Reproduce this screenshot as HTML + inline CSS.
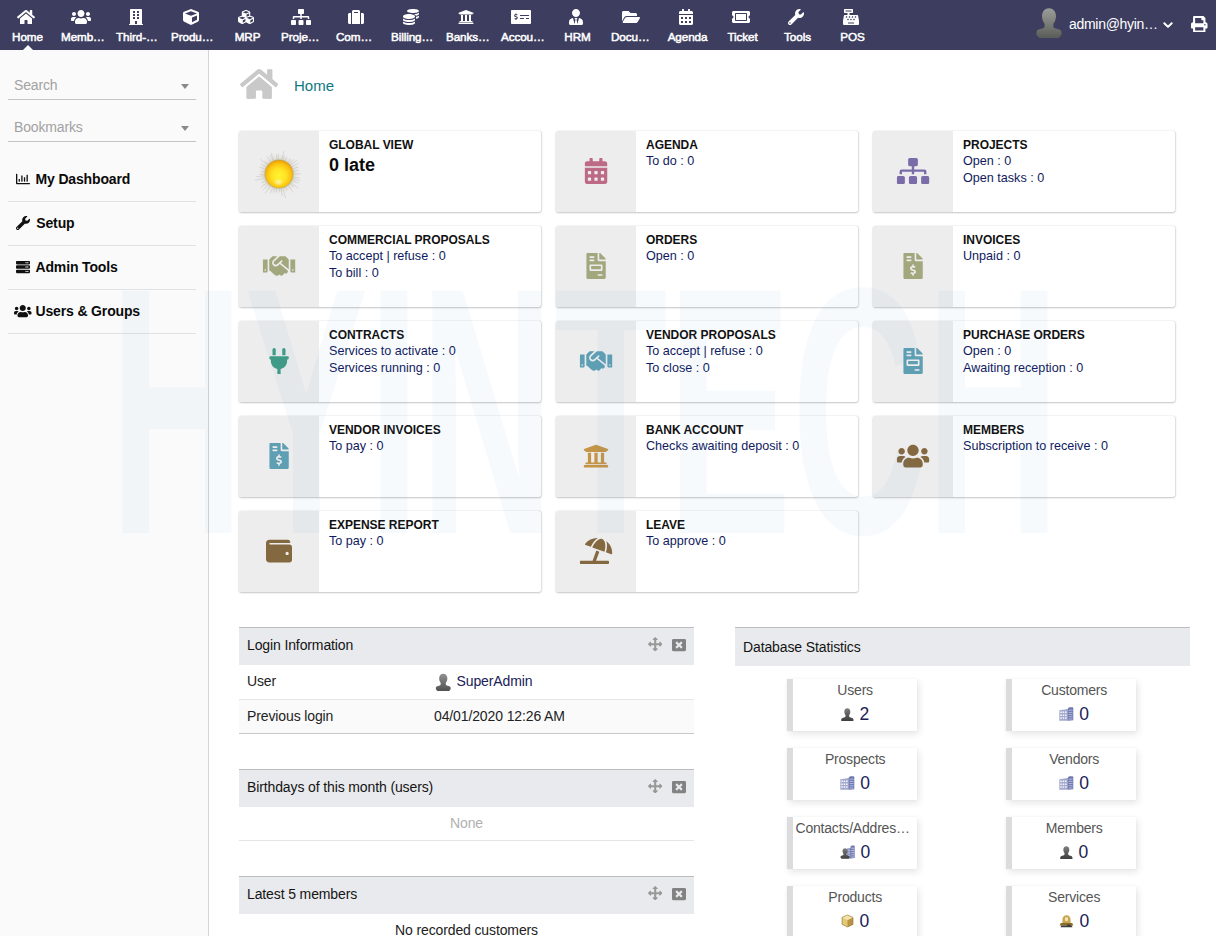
<!DOCTYPE html>
<html><head><meta charset="utf-8"><title>Home</title><style>
*{box-sizing:border-box}
html,body{margin:0;padding:0}
body{width:1216px;height:936px;overflow:hidden;position:relative;background:#fff;font-family:"Liberation Sans",sans-serif;font-size:14px;color:#000}
svg{display:block}
#hdr{position:absolute;left:0;top:0;width:1216px;height:50px;background:#3c3d5f;}
.nav{position:absolute;top:0;width:55px;height:50px;color:#fff}
.nav svg{position:absolute;top:9px;left:26.300px;transform:translateX(-50%)}
.nav span{position:absolute;left:0;width:55px;top:29.700px;text-align:center;font-size:11.7px;line-height:14px;white-space:nowrap;letter-spacing:-0.1px;-webkit-text-stroke:.5px #fff}
#tri{position:absolute;left:22.500px;top:45px;width:0;height:0;border-left:5.500px solid transparent;border-right:5.500px solid transparent;border-bottom:5px solid #fafafa}
#side{position:absolute;left:0;top:50px;width:209px;height:886px;background:#fafafa;border-right:1px solid #d4d4d4}
.sel{position:absolute;left:8px;width:188px;border-bottom:1px solid #c4c4c4;height:28px}
.sel span{position:absolute;left:6px;top:5px;font-size:14px;letter-spacing:-0.15px;line-height:16px;color:#a2a2a2}
.sel i{position:absolute;left:173px;top:12px;width:0;height:0;border-left:4px solid transparent;border-right:4px solid transparent;border-top:5px solid #8a8a8a}
.mi{position:absolute;left:8px;width:188px;height:44px;border-bottom:1px solid #e2e2e2}
.mi svg{position:absolute}
.mi b{position:absolute;top:11.800px;font-size:14px;line-height:18px;font-weight:bold;color:#0a0a0a;letter-spacing:-0.15px}
#crumb{position:absolute;left:294px;top:76px;font-size:15px;line-height:20px;color:#0f7882}
.card{position:absolute;width:302px;height:81px;background:#fff;border-radius:2px;box-shadow:0 1px 2px rgba(0,0,0,.2),1px 0 2px rgba(0,0,0,.08),0 0 1px rgba(0,0,0,.16)}
.card .ic{position:absolute;left:0;top:0;width:80px;height:81px;background:#ededed;border-radius:2px 0 0 2px}
.card .ic svg{position:absolute;left:50%;top:40.200px;transform:translate(-50%,-50%)}
.card .t{position:absolute;left:90px;top:7px;font-size:12px;line-height:14px;font-weight:bold;color:#111;white-space:nowrap;letter-spacing:-0.02px}
.card .l{position:absolute;left:90px;font-size:12.6px;line-height:14px;color:#0f1a60;white-space:nowrap}
.card .big{position:absolute;left:90px;top:23.500px;font-size:18px;line-height:20px;font-weight:bold;color:#0a0a0a;white-space:nowrap}
.box{position:absolute}
.bh{position:absolute;left:0;width:100%;height:38px;background:#e9eaed;border-top:1px solid #bdbdbd}
.bh span{position:absolute;left:8px;top:9.300px;font-size:14px;line-height:16px;color:#141414;letter-spacing:-0.12px;white-space:nowrap}
.bh svg{position:absolute}
.row{position:absolute;left:0;width:100%;height:34px;font-size:14px;color:#222}
.row span{position:absolute;top:8px;line-height:16px;white-space:nowrap;letter-spacing:-0.12px}
.st{position:absolute;width:130.300px;height:52.400px;background:#fff;border-left:6px solid #dcdcdc;box-shadow:2px 3px 7px rgba(0,0,0,.10),0 0 1px rgba(0,0,0,.08)}
.st .n{position:absolute;left:0;width:124.300px;top:3.200px;text-align:center;font-size:14px;letter-spacing:-0.2px;line-height:16px;color:#555;white-space:nowrap}
.st .v{position:absolute;left:0;width:124.300px;top:24px;height:22px;text-align:center;font-size:17.5px;line-height:22px;color:#1a2157;white-space:nowrap}
.st .v svg{display:inline-block;vertical-align:-1px;margin-right:5.500px}
#wm{position:absolute;left:0;top:0;pointer-events:none}
</style></head><body>
<div id="hdr">
<div class="nav" style="left:0px"><svg  width="18.0" height="16" viewBox="0 0 576 512"><path fill="#fff" d="M280.37 148.26L96 300.11V464a16 16 0 0 0 16 16l112.06-.29a16 16 0 0 0 15.92-16V368a16 16 0 0 1 16-16h64a16 16 0 0 1 16 16v95.64a16 16 0 0 0 16 16.05L464 480a16 16 0 0 0 16-16V300L295.67 148.26a12.19 12.19 0 0 0-15.3 0zM571.6 251.47L488 182.56V44.05a12 12 0 0 0-12-12h-56a12 12 0 0 0-12 12v72.61L318.47 43a48 48 0 0 0-61 0L4.34 251.47a12 12 0 0 0-1.6 16.9l25.5 31A12 12 0 0 0 45.15 301l235.22-193.74a12.19 12.19 0 0 1 15.3 0L530.9 301a12 12 0 0 0 16.9-1.6l25.5-31a12 12 0 0 0-1.7-16.93z"/></svg><span>Home</span></div>
<div class="nav" style="left:55px"><svg  width="20.0" height="16" viewBox="0 0 640 512"><path fill="#fff" d="M96 224c35.3 0 64-28.7 64-64s-28.7-64-64-64-64 28.7-64 64 28.7 64 64 64zm448 0c35.3 0 64-28.7 64-64s-28.7-64-64-64-64 28.7-64 64 28.7 64 64 64zm32 32h-64c-17.6 0-33.5 7.1-45.1 18.600 40.3 22.1 68.9 62 75.1 109.400h66c17.700 0 32-14.300 32-32v-32c0-35.300-28.700-64-64-64zm-256 0c61.900 0 112-50.100 112-112S381.900 32 320 32 208 82.100 208 144s50.100 112 112 112zm76.800 32h-8.300c-20.800 10-43.900 16-68.500 16s-47.600-6-68.500-16h-8.300C179.600 288 128 339.600 128 403.200V432c0 26.500 21.500 48 48 48h288c26.500 0 48-21.500 48-48v-28.800c0-63.600-51.600-115.200-115.200-115.200zm-223.700-13.400C161.500 263.100 145.600 256 128 256H64c-35.300 0-64 28.700-64 64v32c0 17.700 14.300 32 32 32h65.900c6.300-47.400 34.900-87.300 75.200-109.400z"/></svg><span style="text-align:left;left:6px">Memb…</span></div>
<div class="nav" style="left:110px"><svg  width="14.0" height="16" viewBox="0 0 448 512"><path fill="#fff" d="M436 480h-20V24c0-13.255-10.745-24-24-24H56C42.745 0 32 10.745 32 24v456H12c-6.627 0-12 5.373-12 12v20h448v-20c0-6.627-5.373-12-12-12zM128 76c0-6.627 5.373-12 12-12h40c6.627 0 12 5.373 12 12v40c0 6.627-5.373 12-12 12h-40c-6.627 0-12-5.373-12-12V76zm0 96c0-6.627 5.373-12 12-12h40c6.627 0 12 5.373 12 12v40c0 6.627-5.373 12-12 12h-40c-6.627 0-12-5.373-12-12v-40zm52 148h-40c-6.627 0-12-5.373-12-12v-40c0-6.627 5.373-12 12-12h40c6.627 0 12 5.373 12 12v40c0 6.627-5.373 12-12 12zm76 160h-64v-84c0-6.627 5.373-12 12-12h40c6.627 0 12 5.373 12 12v84zm64-172c0 6.627-5.373 12-12 12h-40c-6.627 0-12-5.373-12-12v-40c0-6.627 5.373-12 12-12h40c6.627 0 12 5.373 12 12v40zm0-96c0 6.627-5.373 12-12 12h-40c-6.627 0-12-5.373-12-12v-40c0-6.627 5.373-12 12-12h40c6.627 0 12 5.373 12 12v40zm0-96c0 6.627-5.373 12-12 12h-40c-6.627 0-12-5.373-12-12V76c0-6.627 5.373-12 12-12h40c6.627 0 12 5.373 12 12v40z"/></svg><span style="text-align:left;left:6px">Third-…</span></div>
<div class="nav" style="left:165px"><svg  width="16.0" height="16" viewBox="0 0 512 512"><path fill="#fff" d="M239.1 6.3l-208 78c-18.7 7-31.1 25-31.1 45v225.1c0 18.2 10.3 34.8 26.5 42.900l208 104c13.5 6.8 29.4 6.8 42.9 0l208-104c16.3-8.100 26.500-24.800 26.500-42.900V129.300c0-20-12.400-37.900-31.100-44.900l-208-78C262 2.200 250 2.200 239.100 6.300zM256 68.400l192 72v1.100l-192 78-192-78v-1.100l192-72zm32 356V275.500l160-65v133.900l-160 80z"/></svg><span style="text-align:left;left:6px">Produ…</span></div>
<div class="nav" style="left:220px"><svg  width="16.0" height="16" viewBox="0 0 512 512"><path fill="#fff" d="M488.6 250.2L392 214V105.500c0-15-9.300-28.400-23.400-33.700l-100-37.500c-8.100-3.100-17.100-3.100-25.300 0l-100 37.500c-14.100 5.300-23.400 18.700-23.400 33.700V214l-96.600 36.200C9.300 255.500 0 268.900 0 283.900V394c0 13.600 7.700 26.100 19.900 32.200l100 50c10.100 5.100 22.100 5.100 32.200 0l103.900-52 103.900 52c10.100 5.100 22.100 5.100 32.200 0l100-50c12.200-6.100 19.900-18.600 19.900-32.200V283.900c0-15-9.300-28.400-23.400-33.700zM358 214.800l-85 31.900v-68.200l85-37v73.300zM154 104.100l102-38.200 102 38.200v.6l-102 41.400-102-41.400v-.6zm84 291.100l-85 42.500v-79.100l85-38.800v75.400zm0-112l-102 41.400-102-41.400v-.6l102-38.200 102 38.200v.6zm240 112l-85 42.500v-79.100l85-38.800v75.400zm0-112l-102 41.400-102-41.400v-.6l102-38.200 102 38.200v.6z"/></svg><span>MRP</span></div>
<div class="nav" style="left:275px"><svg  width="20.0" height="16" viewBox="0 0 640 512"><path fill="#fff" d="M128 352H32c-17.670 0-32 14.330-32 32v96c0 17.670 14.330 32 32 32h96c17.670 0 32-14.330 32-32v-96c0-17.670-14.330-32-32-32zm-24-80h192v48h48v-48h192v48h48v-57.590c0-21.170-17.230-38.410-38.410-38.410H344v-64h40c17.670 0 32-14.330 32-32V32c0-17.670-14.330-32-32-32H256c-17.670 0-32 14.330-32 32v96c0 17.670 14.330 32 32 32h40v64H94.410C73.230 224 56 241.230 56 262.410V320h48v-48zm264 80h-96c-17.670 0-32 14.330-32 32v96c0 17.670 14.330 32 32 32h96c17.670 0 32-14.330 32-32v-96c0-17.670-14.330-32-32-32zm240 0h-96c-17.670 0-32 14.330-32 32v96c0 17.670 14.330 32 32 32h96c17.670 0 32-14.330 32-32v-96c0-17.670-14.330-32-32-32z"/></svg><span style="text-align:left;left:6px">Proje…</span></div>
<div class="nav" style="left:330px"><svg  width="16.0" height="16" viewBox="0 0 512 512"><path fill="#fff" d="M128 480h256V80c0-26.500-21.500-48-48-48H176c-26.500 0-48 21.500-48 48v400zm64-384h128v32H192V96zm320 80v256c0 26.500-21.500 48-48 48h-48V128h48c26.500 0 48 21.500 48 48zM96 480H48c-26.500 0-48-21.500-48-48V176c0-26.500 21.500-48 48-48h48v352z"/></svg><span style="text-align:left;left:6px">Com…</span></div>
<div class="nav" style="left:385px"><svg  width="16.0" height="16" viewBox="0 0 512 512"><path fill="#fff" d="M0 405.300V448c0 35.300 86 64 192 64s192-28.700 192-64v-42.700C342.700 434.400 267.200 448 192 448S41.300 434.400 0 405.300zM320 128c106 0 192-28.700 192-64S426 0 320 0 128 28.700 128 64s86 64 192 64zM0 300.400V352c0 35.300 86 64 192 64s192-28.700 192-64v-51.600c-41.300 34-116.900 51.600-192 51.600S41.300 334.400 0 300.400zm416 11c57.300-11.100 96-31.700 96-55.400v-42.700c-23.200 16.400-57.300 27.600-96 34.500v63.600zM192 160C86 160 0 195.800 0 240s86 80 192 80 192-35.800 192-80-86-80-192-80zm219.300 56.300c60-10.800 100.700-32 100.700-56.300v-42.700c-35.500 25.100-96.500 38.600-160.700 41.800 29.500 14.300 51.200 33.500 60 57.200z"/></svg><span style="text-align:left;left:6px">Billing…</span></div>
<div class="nav" style="left:440px"><svg  width="16.0" height="16" viewBox="0 0 512 512"><path fill="#fff" d="M496 128v16a8 8 0 0 1-8 8h-24v12c0 6.627-5.373 12-12 12H60c-6.627 0-12-5.373-12-12v-12H24a8 8 0 0 1-8-8v-16a8 8 0 0 1 4.941-7.392l232-88a7.996 7.996 0 0 1 6.118 0l232 88A8 8 0 0 1 496 128zm-24 304H40c-13.255 0-24 10.745-24 24v16a8 8 0 0 0 8 8h464a8 8 0 0 0 8-8v-16c0-13.255-10.745-24-24-24zM96 192v192H60c-6.627 0-12 5.373-12 12v20h416v-20c0-6.627-5.373-12-12-12h-36V192h-64v192h-64V192h-64v192h-64V192H96z"/></svg><span style="text-align:left;left:6px">Banks…</span></div>
<div class="nav" style="left:495px"><svg  width="20.0" height="16" viewBox="0 0 640 512"><path fill="#fff" d="M608 32H32C14.33 32 0 46.33 0 64v384c0 17.670 14.330 32 32 32h576c17.670 0 32-14.330 32-32V64c0-17.670-14.330-32-32-32zM176 327.880V344c0 4.420-3.580 8-8 8h-16c-4.420 0-8-3.580-8-8v-16.290c-11.290-.58-22.270-4.520-31.370-11.350-3.900-2.930-4.100-8.770-.57-12.140l11.750-11.210c2.770-2.640 6.890-2.760 10.130-.73 3.870 2.420 8.260 3.720 12.820 3.720h28.110c6.500 0 11.800-5.920 11.800-13.190 0-5.950-3.610-11.190-8.770-12.730l-45-13.500c-18.590-5.580-31.580-23.420-31.580-43.390 0-24.520 19.050-44.440 42.670-45.070V152c0-4.420 3.580-8 8-8h16c4.420 0 8 3.580 8 8v16.290c11.290.58 22.270 4.510 31.370 11.350 3.900 2.930 4.100 8.770.57 12.140l-11.750 11.210c-2.770 2.640-6.890 2.760-10.130.73-3.870-2.430-8.260-3.720-12.820-3.720h-28.110c-6.500 0-11.800 5.920-11.800 13.190 0 5.950 3.610 11.190 8.770 12.730l45 13.500c18.590 5.580 31.580 23.420 31.580 43.390 0 24.530-19.050 44.440-42.670 45.070zM416 312c0 4.420-3.580 8-8 8H296c-4.420 0-8-3.580-8-8v-16c0-4.420 3.580-8 8-8h112c4.420 0 8 3.580 8 8v16zm160 0c0 4.420-3.580 8-8 8h-80c-4.420 0-8-3.580-8-8v-16c0-4.420 3.580-8 8-8h80c4.420 0 8 3.580 8 8v16zm0-96c0 4.420-3.580 8-8 8H296c-4.420 0-8-3.580-8-8v-16c0-4.420 3.580-8 8-8h272c4.420 0 8 3.580 8 8v16z"/></svg><span style="text-align:left;left:6px">Accou…</span></div>
<div class="nav" style="left:550px"><svg  width="14.0" height="16" viewBox="0 0 448 512"><path fill="#fff" d="M224 256c70.700 0 128-57.300 128-128S294.700 0 224 0 96 57.300 96 128s57.300 128 128 128zm95.800 32.600L272 480l-32-136 32-56h-96l32 56-32 136-47.800-191.400C56.900 292 0 350.300 0 422.400V464c0 26.500 21.500 48 48 48h352c26.500 0 48-21.500 48-48v-41.600c0-72.100-56.900-130.400-128.200-133.800z"/></svg><span>HRM</span></div>
<div class="nav" style="left:605px"><svg  width="18.0" height="16" viewBox="0 0 576 512"><path fill="#fff" d="M572.694 292.093L500.27 416.248A63.997 63.997 0 0 1 444.989 448H45.025c-18.523 0-30.064-20.093-20.731-36.093l72.424-124.155A64 64 0 0 1 152 256h399.964c18.523 0 30.064 20.093 20.730 36.093zM152 224h328v-48c0-26.510-21.490-48-48-48H272l-64-64H48C21.490 64 0 85.490 0 112v278.046l69.077-118.418C86.214 242.250 117.989 224 152 224z"/></svg><span style="text-align:left;left:6px">Docu…</span></div>
<div class="nav" style="left:660px"><svg  width="14.0" height="16" viewBox="0 0 448 512"><path fill="#fff" d="M0 464c0 26.500 21.500 48 48 48h352c26.500 0 48-21.500 48-48V192H0v272zm320-196c0-6.600 5.400-12 12-12h40c6.600 0 12 5.400 12 12v40c0 6.600-5.400 12-12 12h-40c-6.600 0-12-5.400-12-12v-40zm0 128c0-6.600 5.400-12 12-12h40c6.600 0 12 5.400 12 12v40c0 6.600-5.400 12-12 12h-40c-6.600 0-12-5.400-12-12v-40zM192 268c0-6.600 5.400-12 12-12h40c6.600 0 12 5.400 12 12v40c0 6.600-5.400 12-12 12h-40c-6.600 0-12-5.400-12-12v-40zm0 128c0-6.600 5.400-12 12-12h40c6.600 0 12 5.400 12 12v40c0 6.600-5.400 12-12 12h-40c-6.600 0-12-5.400-12-12v-40zM64 268c0-6.600 5.400-12 12-12h40c6.600 0 12 5.400 12 12v40c0 6.600-5.400 12-12 12H76c-6.600 0-12-5.400-12-12v-40zm0 128c0-6.600 5.400-12 12-12h40c6.600 0 12 5.400 12 12v40c0 6.600-5.400 12-12 12H76c-6.600 0-12-5.400-12-12v-40zM400 64h-48V16c0-8.800-7.200-16-16-16h-32c-8.800 0-16 7.200-16 16v48H160V16c0-8.800-7.200-16-16-16h-32c-8.800 0-16 7.200-16 16v48H48C21.500 64 0 85.500 0 112v48h448v-48c0-26.500-21.500-48-48-48z"/></svg><span>Agenda</span></div>
<div class="nav" style="left:715px"><svg  width="18.0" height="16" viewBox="0 0 576 512"><path fill="#fff" d="M128 160h320v192H128V160zm400 96c0 26.510 21.490 48 48 48v96c0 26.510-21.490 48-48 48H48c-26.510 0-48-21.490-48-48v-96c26.510 0 48-21.490 48-48s-21.490-48-48-48v-96c0-26.510 21.490-48 48-48h480c26.510 0 48 21.490 48 48v96c-26.510 0-48 21.490-48 48zm-48-104c0-13.255-10.745-24-24-24H120c-13.255 0-24 10.745-24 24v208c0 13.255 10.745 24 24 24h336c13.255 0 24-10.745 24-24V152z"/></svg><span>Ticket</span></div>
<div class="nav" style="left:770px"><svg  width="16.0" height="16" viewBox="0 0 512 512"><path fill="#fff" d="M507.73 109.1c-2.24-9.03-13.54-12.09-20.12-5.51l-74.36 74.36-67.88-11.310-11.310-67.880 74.360-74.360c6.620-6.620 3.430-17.900-5.660-20.160-47.380-11.740-99.550.910-136.580 37.930-39.640 39.640-50.550 97.100-34.050 147.200L18.740 402.760c-24.990 24.990-24.990 65.510 0 90.500 24.990 24.990 65.510 24.990 90.500 0l213.210-213.210c50.120 16.710 107.470 5.680 147.370-34.220 37.070-37.070 49.700-89.320 37.910-136.730zM64 472c-13.250 0-24-10.750-24-24 0-13.260 10.750-24 24-24s24 10.740 24 24c0 13.250-10.750 24-24 24z"/></svg><span>Tools</span></div>
<div class="nav" style="left:825px"><svg  width="16.0" height="16" viewBox="0 0 512 512"><path fill="#fff" d="M511.1 378.8l-26.7-160c-2.6-15.400-15.900-26.700-31.600-26.700H208v-64h96c8.800 0 16-7.200 16-16V16c0-8.800-7.200-16-16-16H48c-8.800 0-16 7.200-16 16v96c0 8.800 7.200 16 16 16h96v64H59.100c-15.600 0-29 11.300-31.600 26.700L.8 378.700c-.6 3.500-.9 7-.9 10.500V480c0 17.700 14.300 32 32 32h448c17.700 0 32-14.300 32-32v-90.700c.1-3.500-.2-7-.8-10.500zM280 248c0-8.800 7.200-16 16-16h16c8.800 0 16 7.200 16 16v16c0 8.800-7.200 16-16 16h-16c-8.800 0-16-7.200-16-16v-16zm-32 64h16c8.800 0 16 7.200 16 16v16c0 8.800-7.200 16-16 16h-16c-8.800 0-16-7.200-16-16v-16c0-8.800 7.200-16 16-16zm-32-80c8.800 0 16 7.200 16 16v16c0 8.800-7.200 16-16 16h-16c-8.800 0-16-7.200-16-16v-16c0-8.800 7.200-16 16-16h16zM80 80V48h192v32H80zm40 200h-16c-8.800 0-16-7.200-16-16v-16c0-8.800 7.200-16 16-16h16c8.800 0 16 7.200 16 16v16c0 8.800-7.200 16-16 16zm16 64v-16c0-8.800 7.200-16 16-16h16c8.800 0 16 7.200 16 16v16c0 8.800-7.200 16-16 16h-16c-8.800 0-16-7.200-16-16zm216 112c0 4.400-3.600 8-8 8H168c-4.400 0-8-3.600-8-8v-16c0-4.400 3.600-8 8-8h176c4.400 0 8 3.600 8 8v16zm24-112c0 8.800-7.200 16-16 16h-16c-8.800 0-16-7.200-16-16v-16c0-8.800 7.200-16 16-16h16c8.800 0 16 7.200 16 16v16zm48-80c0 8.800-7.200 16-16 16h-16c-8.800 0-16-7.200-16-16v-16c0-8.800 7.200-16 16-16h16c8.800 0 16 7.200 16 16v16z"/></svg><span>POS</span></div>
<div id="tri"></div>
<svg style="position:absolute;left:1035px;top:7px" width="28" height="32" viewBox="0 0 28 32"><defs><linearGradient id="ag" x1="0" y1="0" x2="0" y2="1"><stop offset="0" stop-color="#9a9d98"/><stop offset="0.5" stop-color="#7c7f79"/><stop offset="1" stop-color="#595c57"/></linearGradient></defs><path fill="url(#ag)" d="M14 1.200c4 0 7 3.300 7 7.800 0 3.300-1.200 6.100-2.600 7.700v2.600c0 1 .6 1.700 1.600 2l4.300 1.200c1.400.4 2.300 1.500 2.300 2.900v1.400c0 .5-.2 1-.5 1.400l-1.700 2c-.4.400-.9.700-1.500.700H5.100c-.6 0-1.100-.3-1.500-.7l-1.700-2c-.3-.4-.5-.9-.5-1.400v-1.400c0-1.400.9-2.500 2.300-2.900L8 21.300c1-.3 1.600-1 1.600-2v-2.600C8.200 15.100 7 12.300 7 9c0-4.500 3-7.800 7-7.800z"/></svg><span style="position:absolute;left:1069px;top:15.500px;font-size:14px;line-height:16px;color:#fff;letter-spacing:-0.3px;white-space:nowrap">admin@hyin…</span>
<svg style="position:absolute;left:1162.200px;top:20.600px" width="12" height="9" viewBox="0 0 12 9"><path d="M2.300 2.200l3.700 3.700 3.700-3.700" fill="none" stroke="#fff" stroke-width="2" stroke-linecap="round" stroke-linejoin="round"/></svg>
<svg style="position:absolute;left:1191px;top:15.800px" width="16.5" height="16.5" viewBox="0 0 512 512"><path fill="#fff" d="M448 192V77.250c0-8.490-3.370-16.620-9.370-22.630L393.370 9.370c-6-6-14.140-9.370-22.630-9.370H96C78.330 0 64 14.330 64 32v160c-35.350 0-64 28.650-64 64v112c0 8.840 7.160 16 16 16h48v96c0 17.670 14.330 32 32 32h320c17.670 0 32-14.330 32-32v-96h48c8.840 0 16-7.160 16-16V256c0-35.350-28.650-64-64-64zm-64 256H128v-96h256v96zm0-224H128V64h192v48c0 8.840 7.160 16 16 16h48v96zm48 72c-13.250 0-24-10.750-24-24 0-13.260 10.750-24 24-24s24 10.740 24 24c0 13.250-10.750 24-24 24z"/></svg>
</div>
<div id="side">
<div class="sel" style="top:22px"><span>Search</span><i></i></div>
<div class="sel" style="top:64px"><span>Bookmarks</span><i></i></div>
<div class="mi" style="top:108px"><svg style="left:7.75px;top:14.200px"  width="14.0" height="14" viewBox="0 0 512 512"><path fill="#111" d="M396.8 352h22.400c6.400 0 12.800-6.400 12.800-12.800V108.800c0-6.400-6.400-12.800-12.800-12.800h-22.400c-6.400 0-12.800 6.400-12.800 12.800v230.400c0 6.400 6.400 12.800 12.800 12.800zm-192 0h22.400c6.400 0 12.800-6.400 12.800-12.800V140.800c0-6.400-6.400-12.800-12.800-12.800h-22.400c-6.400 0-12.800 6.400-12.800 12.800v198.400c0 6.400 6.400 12.800 12.800 12.800zm96 0h22.400c6.400 0 12.800-6.400 12.800-12.800V204.800c0-6.400-6.400-12.800-12.800-12.800h-22.400c-6.400 0-12.800 6.400-12.800 12.800v134.400c0 6.400 6.400 12.800 12.800 12.800zM496 400H48V80c0-8.840-7.160-16-16-16H16C7.160 64 0 71.160 0 80v336c0 17.670 14.330 32 32 32h464c8.840 0 16-7.160 16-16v-16c0-8.840-7.160-16-16-16zm-387.200-48h22.400c6.400 0 12.800-6.400 12.800-12.800v-70.400c0-6.400-6.400-12.800-12.800-12.800h-22.400c-6.400 0-12.800 6.400-12.800 12.800v70.400c0 6.400 6.400 12.800 12.800 12.800z"/></svg><b style="left:27.5px">My Dashboard</b></div>
<div class="mi" style="top:152px"><svg style="left:7.75px;top:14.200px"  width="14.0" height="14" viewBox="0 0 512 512"><path fill="#111" d="M507.73 109.1c-2.24-9.03-13.54-12.09-20.12-5.51l-74.36 74.36-67.88-11.310-11.310-67.880 74.360-74.360c6.620-6.620 3.430-17.900-5.660-20.160-47.380-11.740-99.550.910-136.580 37.930-39.640 39.640-50.550 97.100-34.050 147.200L18.740 402.760c-24.990 24.990-24.990 65.510 0 90.500 24.990 24.990 65.510 24.990 90.500 0l213.210-213.210c50.120 16.710 107.470 5.680 147.370-34.220 37.070-37.070 49.700-89.320 37.910-136.730zM64 472c-13.250 0-24-10.750-24-24 0-13.260 10.750-24 24-24s24 10.740 24 24c0 13.250-10.750 24-24 24z"/></svg><b style="left:28.299999999999997px">Setup</b></div>
<div class="mi" style="top:196px"><svg style="left:7.75px;top:14.200px"  width="14.0" height="14" viewBox="0 0 512 512"><path fill="#111" d="M480 160H32c-17.673 0-32-14.327-32-32V64c0-17.673 14.327-32 32-32h448c17.673 0 32 14.327 32 32v64c0 17.673-14.327 32-32 32zm-48-88c-13.255 0-24 10.745-24 24s10.745 24 24 24 24-10.745 24-24-10.745-24-24-24zm-64 0c-13.255 0-24 10.745-24 24s10.745 24 24 24 24-10.745 24-24-10.745-24-24-24zm112 248H32c-17.673 0-32-14.327-32-32v-64c0-17.673 14.327-32 32-32h448c17.673 0 32 14.327 32 32v64c0 17.673-14.327 32-32 32zm-48-88c-13.255 0-24 10.745-24 24s10.745 24 24 24 24-10.745 24-24-10.745-24-24-24zm-64 0c-13.255 0-24 10.745-24 24s10.745 24 24 24 24-10.745 24-24-10.745-24-24-24zm112 248H32c-17.673 0-32-14.327-32-32v-64c0-17.673 14.327-32 32-32h448c17.673 0 32 14.327 32 32v64c0 17.673-14.327 32-32 32zm-48-88c-13.255 0-24 10.745-24 24s10.745 24 24 24 24-10.745 24-24-10.745-24-24-24zm-64 0c-13.255 0-24 10.745-24 24s10.745 24 24 24 24-10.745 24-24-10.745-24-24-24z"/></svg><b style="left:27.5px">Admin Tools</b></div>
<div class="mi" style="top:240px"><svg style="left:6.00px;top:14.200px"  width="17.5" height="14" viewBox="0 0 640 512"><path fill="#111" d="M96 224c35.3 0 64-28.7 64-64s-28.7-64-64-64-64 28.7-64 64 28.7 64 64 64zm448 0c35.3 0 64-28.7 64-64s-28.7-64-64-64-64 28.7-64 64 28.7 64 64 64zm32 32h-64c-17.6 0-33.5 7.1-45.1 18.600 40.3 22.1 68.9 62 75.1 109.400h66c17.700 0 32-14.300 32-32v-32c0-35.300-28.700-64-64-64zm-256 0c61.900 0 112-50.100 112-112S381.900 32 320 32 208 82.100 208 144s50.100 112 112 112zm76.800 32h-8.300c-20.800 10-43.900 16-68.500 16s-47.600-6-68.500-16h-8.300C179.600 288 128 339.600 128 403.200V432c0 26.500 21.500 48 48 48h288c26.500 0 48-21.500 48-48v-28.800c0-63.600-51.600-115.200-115.200-115.200zm-223.700-13.400C161.500 263.100 145.600 256 128 256H64c-35.300 0-64 28.700-64 64v32c0 17.700 14.300 32 32 32h65.900c6.300-47.400 34.900-87.300 75.200-109.400z"/></svg><b style="left:27.5px">Users &amp; Groups</b></div>
</div>
<svg style="position:absolute;left:240px;top:67px" width="38.25" height="34" viewBox="0 0 576 512"><path fill="#c9c9c9" d="M280.37 148.26L96 300.11V464a16 16 0 0 0 16 16l112.06-.29a16 16 0 0 0 15.92-16V368a16 16 0 0 1 16-16h64a16 16 0 0 1 16 16v95.64a16 16 0 0 0 16 16.05L464 480a16 16 0 0 0 16-16V300L295.67 148.26a12.19 12.19 0 0 0-15.3 0zM571.6 251.47L488 182.56V44.05a12 12 0 0 0-12-12h-56a12 12 0 0 0-12 12v72.61L318.47 43a48 48 0 0 0-61 0L4.34 251.47a12 12 0 0 0-1.6 16.9l25.5 31A12 12 0 0 0 45.15 301l235.22-193.74a12.19 12.19 0 0 1 15.3 0L530.9 301a12 12 0 0 0 16.9-1.6l25.5-31a12 12 0 0 0-1.7-16.93z"/></svg>
<div id="crumb">Home</div>
<div class="card" style="left:239px;top:131px"><div class="ic"><svg width="52" height="52" viewBox="-1 -1 52 52" style="margin-top:3.300px;margin-left:.3px"><defs><radialGradient id="sg" cx="0.5" cy="0.56" r="0.56"><stop offset="0" stop-color="#fff530"/><stop offset="0.45" stop-color="#ffe324"/><stop offset="0.8" stop-color="#fbbf10"/><stop offset="1" stop-color="#ec9a00"/></radialGradient><radialGradient id="sr" cx="0.5" cy="0.5" r="0.5"><stop offset="0.62" stop-color="#b8a868" stop-opacity=".5"/><stop offset="0.8" stop-color="#d4d0c4" stop-opacity=".3"/><stop offset="1" stop-color="#e4e4e4" stop-opacity="0"/></radialGradient><radialGradient id="sh" cx="0.5" cy="0.5" r="0.5"><stop offset="0" stop-color="#fffde0" stop-opacity=".8"/><stop offset="1" stop-color="#fff8a0" stop-opacity="0"/></radialGradient></defs><circle cx="25" cy="25" r="21" fill="url(#sr)"/><path d="M39.0 24.9L46.9 24.9M38.7 27.8L45.8 29.2M38.3 29.3L46.0 31.8M37.7 31.0L44.5 34.2M36.2 33.4L43.9 39.1M35.3 34.5L39.8 38.6M33.7 36.0L39.7 43.6M31.1 37.6L33.0 41.5M28.7 38.5L31.5 48.9M27.0 38.9L28.2 47.1M25.5 39.0L25.6 43.1M22.8 38.8L22.1 43.2M21.1 38.4L19.5 43.9M19.2 37.8L16.3 44.4M16.8 36.4L11.1 44.4M15.1 34.9L9.1 40.9M13.7 33.2L6.7 38.3M12.6 31.4L7.3 34.1M11.5 28.7L0.9 31.5M11.1 26.7L2.2 27.8M11.0 25.3L5.4 25.4M11.1 23.1L6.7 22.5M11.8 20.3L5.4 18.0M12.8 18.2L6.9 15.0M14.1 16.3L6.3 10.1M14.6 15.6L10.6 11.9M17.2 13.3L13.2 7.3M19.3 12.2L16.5 6.1M20.1 11.9L17.2 4.0M23.2 11.1L22.4 5.3M24.4 11.0L24.2 4.7M27.8 11.3L29.7 2.2M28.8 11.5L30.4 6.0M30.9 12.3L32.7 8.3M33.6 13.9L36.8 9.8M35.0 15.2L40.0 10.1M36.1 16.4L43.3 10.8M37.2 18.2L44.7 14.0M38.1 20.2L44.7 17.8M38.8 22.4L44.5 21.3" stroke="#c8c6c0" stroke-opacity=".75" stroke-width=".8" fill="none"/><circle cx="25" cy="25" r="14.500" fill="#a89440" fill-opacity=".55"/><circle cx="25" cy="25" r="13.800" fill="url(#sg)"/><ellipse cx="24.500" cy="33" rx="5.500" ry="4" fill="url(#sh)"/></svg></div><div class="t">GLOBAL VIEW</div><div class="big">0 late</div></div>
<div class="card" style="left:556px;top:131px"><div class="ic"><svg  width="22.75" height="26" viewBox="0 0 448 512"><path fill="#bd6a86" d="M0 464c0 26.500 21.500 48 48 48h352c26.500 0 48-21.500 48-48V192H0v272zm320-196c0-6.600 5.400-12 12-12h40c6.600 0 12 5.400 12 12v40c0 6.600-5.400 12-12 12h-40c-6.600 0-12-5.400-12-12v-40zm0 128c0-6.600 5.400-12 12-12h40c6.600 0 12 5.400 12 12v40c0 6.600-5.400 12-12 12h-40c-6.600 0-12-5.400-12-12v-40zM192 268c0-6.600 5.400-12 12-12h40c6.600 0 12 5.400 12 12v40c0 6.600-5.400 12-12 12h-40c-6.600 0-12-5.400-12-12v-40zm0 128c0-6.600 5.400-12 12-12h40c6.600 0 12 5.400 12 12v40c0 6.600-5.400 12-12 12h-40c-6.600 0-12-5.400-12-12v-40zM64 268c0-6.600 5.400-12 12-12h40c6.600 0 12 5.400 12 12v40c0 6.600-5.400 12-12 12H76c-6.600 0-12-5.400-12-12v-40zm0 128c0-6.600 5.400-12 12-12h40c6.600 0 12 5.400 12 12v40c0 6.600-5.400 12-12 12H76c-6.600 0-12-5.400-12-12v-40zM400 64h-48V16c0-8.800-7.200-16-16-16h-32c-8.800 0-16 7.200-16 16v48H160V16c0-8.800-7.200-16-16-16h-32c-8.800 0-16 7.200-16 16v48H48C21.500 64 0 85.500 0 112v48h448v-48c0-26.500-21.500-48-48-48z"/></svg></div><div class="t">AGENDA</div><div class="l" style="top:22.5px">To do : 0</div></div>
<div class="card" style="left:873px;top:131px"><div class="ic"><svg  width="32.5" height="26" viewBox="0 0 640 512"><path fill="#7a6ca8" d="M128 352H32c-17.670 0-32 14.330-32 32v96c0 17.670 14.330 32 32 32h96c17.670 0 32-14.330 32-32v-96c0-17.670-14.330-32-32-32zm-24-80h192v48h48v-48h192v48h48v-57.590c0-21.170-17.230-38.410-38.410-38.410H344v-64h40c17.670 0 32-14.330 32-32V32c0-17.670-14.330-32-32-32H256c-17.670 0-32 14.330-32 32v96c0 17.670 14.330 32 32 32h40v64H94.410C73.230 224 56 241.230 56 262.410V320h48v-48zm264 80h-96c-17.670 0-32 14.330-32 32v96c0 17.670 14.330 32 32 32h96c17.670 0 32-14.330 32-32v-96c0-17.670-14.330-32-32-32zm240 0h-96c-17.670 0-32 14.330-32 32v96c0 17.670 14.330 32 32 32h96c17.670 0 32-14.330 32-32v-96c0-17.670-14.330-32-32-32z"/></svg></div><div class="t">PROJECTS</div><div class="l" style="top:22.5px">Open : 0</div><div class="l" style="top:39.5px">Open tasks : 0</div></div>
<div class="card" style="left:239px;top:226px"><div class="ic"><svg  width="32.5" height="26" viewBox="0 0 640 512"><path fill="#a3a77e" d="M434.7 64h-85.9c-8 0-15.7 3-21.6 8.4l-98.3 90c-.1.1-.2.3-.3.4-16.6 15.600-16.300 40.500-2.100 56 12.700 13.900 39.400 17.600 56.100 2.700.1-.1.3-.1.4-.2l79.900-73.200c6.500-5.900 16.700-5.500 22.600 1 6 6.500 5.500 16.600-1 22.600l-26.100 23.900L504 313.800c2.900 2.400 5.500 5 7.900 7.700V128l-54.600-54.600c-5.900-6-14.100-9.400-22.600-9.400zM544 128.200v223.900c0 17.700 14.300 32 32 32h64V128.200h-96zm48 223.900c-8.800 0-16-7.200-16-16s7.200-16 16-16 16 7.200 16 16-7.200 16-16 16zM0 384h64c17.700 0 32-14.300 32-32V128.200H0V384zm48-63.900c8.800 0 16 7.200 16 16s-7.200 16-16 16-16-7.200-16-16c0-8.900 7.200-16 16-16zm435.900 18.600L334.600 217.500l-30 27.500c-29.700 27.100-75.200 24.500-101.700-4.400-26.900-29.400-24.800-74.900 4.400-101.700L289.100 64h-83.800c-8.500 0-16.600 3.400-22.600 9.400L128 128v223.900h18.300l90.500 81.900c27.400 22.300 67.700 18.100 90-9.300l.2-.2 17.900 15.500c15.900 13 39.400 10.500 52.300-5.400l31.400-38.600 5.400 4.400c13.700 11.100 33.900 9.100 45-4.700l9.500-11.700c11.200-13.800 9.100-33.900-4.600-45.100z"/></svg></div><div class="t">COMMERCIAL PROPOSALS</div><div class="l" style="top:22.5px">To accept | refuse : 0</div><div class="l" style="top:39.5px">To bill : 0</div></div>
<div class="card" style="left:556px;top:226px"><div class="ic"><svg  width="19.5" height="26" viewBox="0 0 384 512"><path fill="#a3a77e" d="M288 256H96v64h192v-64zm89-151L279.100 7c-4.500-4.500-10.600-7-17-7H256v128h128v-6.100c0-6.300-2.500-12.400-7-16.900zm-153 31V0H24C10.700 0 0 10.700 0 24v464c0 13.300 10.700 24 24 24h336c13.300 0 24-10.700 24-24V160H248c-13.200 0-24-10.800-24-24zM64 72c0-4.420 3.580-8 8-8h80c4.420 0 8 3.580 8 8v16c0 4.420-3.580 8-8 8H72c-4.420 0-8-3.580-8-8V72zm0 64c0-4.420 3.580-8 8-8h80c4.420 0 8 3.580 8 8v16c0 4.420-3.580 8-8 8H72c-4.420 0-8-3.580-8-8v-16zm256 304c0 4.420-3.580 8-8 8h-80c-4.420 0-8-3.580-8-8v-16c0-4.420 3.580-8 8-8h80c4.420 0 8 3.580 8 8v16zm0-200v96c0 8.840-7.160 16-16 16H80c-8.840 0-16-7.160-16-16v-96c0-8.840 7.160-16 16-16h224c8.840 0 16 7.160 16 16z"/></svg></div><div class="t">ORDERS</div><div class="l" style="top:22.5px">Open : 0</div></div>
<div class="card" style="left:873px;top:226px"><div class="ic"><svg  width="19.5" height="26" viewBox="0 0 384 512"><path fill="#a3a77e" d="M377 105L279.100 7c-4.500-4.500-10.600-7-17-7H256v128h128v-6.100c0-6.300-2.500-12.400-7-16.900zm-153 31V0H24C10.700 0 0 10.700 0 24v464c0 13.300 10.700 24 24 24h336c13.300 0 24-10.700 24-24V160H248c-13.200 0-24-10.800-24-24zM64 72c0-4.420 3.580-8 8-8h80c4.420 0 8 3.580 8 8v16c0 4.420-3.580 8-8 8H72c-4.420 0-8-3.580-8-8V72zm0 80v-16c0-4.420 3.580-8 8-8h80c4.420 0 8 3.580 8 8v16c0 4.420-3.580 8-8 8H72c-4.420 0-8-3.580-8-8zm144 263.880V440c0 4.420-3.580 8-8 8h-16c-4.420 0-8-3.580-8-8v-24.290c-11.290-.58-22.270-4.520-31.370-11.350-3.900-2.930-4.100-8.770-.57-12.140l11.750-11.210c2.770-2.640 6.890-2.760 10.130-.73 3.870 2.420 8.260 3.720 12.820 3.720h28.110c6.500 0 11.800-5.920 11.800-13.190 0-5.950-3.610-11.190-8.770-12.730l-45-13.500c-18.590-5.580-31.580-23.420-31.580-43.390 0-24.520 19.050-44.440 42.670-45.070V232c0-4.420 3.580-8 8-8h16c4.420 0 8 3.580 8 8v24.290c11.290.58 22.270 4.510 31.370 11.350 3.900 2.930 4.100 8.770.57 12.140l-11.750 11.210c-2.770 2.640-6.890 2.760-10.130.73-3.870-2.430-8.260-3.720-12.820-3.720h-28.110c-6.500 0-11.800 5.920-11.800 13.190 0 5.950 3.610 11.190 8.770 12.730l45 13.500c18.590 5.580 31.580 23.420 31.580 43.390 0 24.530-19.050 44.440-42.670 45.070z"/></svg></div><div class="t">INVOICES</div><div class="l" style="top:22.5px">Unpaid : 0</div></div>
<div class="card" style="left:239px;top:321px"><div class="ic"><svg  width="19.5" height="26" viewBox="0 0 384 512"><path fill="#3f9b84" d="M256 144V32c0-17.673 14.327-32 32-32s32 14.327 32 32v112h-64zm112 16H16c-8.837 0-16 7.163-16 16v32c0 8.837 7.163 16 16 16h16v32c0 77.406 54.969 141.971 128 156.796V512h64v-99.204c73.031-14.825 128-79.390 128-156.796v-32h16c8.837 0 16-7.163 16-16v-32c0-8.837-7.163-16-16-16zm-240-16V32c0-17.673-14.327-32-32-32S64 14.327 64 32v112h64z"/></svg></div><div class="t">CONTRACTS</div><div class="l" style="top:22.5px">Services to activate : 0</div><div class="l" style="top:39.5px">Services running : 0</div></div>
<div class="card" style="left:556px;top:321px"><div class="ic"><svg  width="32.5" height="26" viewBox="0 0 640 512"><path fill="#5f9fb4" d="M434.7 64h-85.9c-8 0-15.7 3-21.6 8.4l-98.3 90c-.1.1-.2.3-.3.4-16.6 15.600-16.300 40.500-2.100 56 12.700 13.900 39.400 17.600 56.100 2.700.1-.1.3-.1.4-.2l79.900-73.200c6.500-5.900 16.700-5.500 22.600 1 6 6.500 5.500 16.600-1 22.600l-26.100 23.900L504 313.800c2.900 2.400 5.500 5 7.900 7.700V128l-54.600-54.600c-5.900-6-14.100-9.400-22.600-9.400zM544 128.200v223.900c0 17.700 14.300 32 32 32h64V128.200h-96zm48 223.900c-8.800 0-16-7.200-16-16s7.200-16 16-16 16 7.200 16 16-7.200 16-16 16zM0 384h64c17.700 0 32-14.300 32-32V128.200H0V384zm48-63.900c8.800 0 16 7.200 16 16s-7.200 16-16 16-16-7.200-16-16c0-8.900 7.200-16 16-16zm435.900 18.600L334.600 217.500l-30 27.500c-29.700 27.100-75.200 24.500-101.700-4.400-26.900-29.400-24.800-74.900 4.400-101.700L289.100 64h-83.800c-8.500 0-16.600 3.400-22.600 9.400L128 128v223.900h18.300l90.500 81.900c27.400 22.300 67.700 18.100 90-9.300l.2-.2 17.900 15.500c15.900 13 39.400 10.500 52.300-5.400l31.400-38.600 5.400 4.400c13.700 11.100 33.900 9.100 45-4.700l9.500-11.700c11.200-13.800 9.100-33.900-4.600-45.100z"/></svg></div><div class="t">VENDOR PROPOSALS</div><div class="l" style="top:22.5px">To accept | refuse : 0</div><div class="l" style="top:39.5px">To close : 0</div></div>
<div class="card" style="left:873px;top:321px"><div class="ic"><svg  width="19.5" height="26" viewBox="0 0 384 512"><path fill="#5f9fb4" d="M288 256H96v64h192v-64zm89-151L279.100 7c-4.500-4.500-10.600-7-17-7H256v128h128v-6.100c0-6.300-2.500-12.400-7-16.900zm-153 31V0H24C10.700 0 0 10.700 0 24v464c0 13.300 10.700 24 24 24h336c13.300 0 24-10.700 24-24V160H248c-13.200 0-24-10.800-24-24zM64 72c0-4.420 3.580-8 8-8h80c4.420 0 8 3.580 8 8v16c0 4.420-3.580 8-8 8H72c-4.420 0-8-3.580-8-8V72zm0 64c0-4.420 3.580-8 8-8h80c4.420 0 8 3.580 8 8v16c0 4.420-3.580 8-8 8H72c-4.420 0-8-3.580-8-8v-16zm256 304c0 4.420-3.580 8-8 8h-80c-4.420 0-8-3.580-8-8v-16c0-4.420 3.580-8 8-8h80c4.420 0 8 3.580 8 8v16zm0-200v96c0 8.840-7.160 16-16 16H80c-8.840 0-16-7.160-16-16v-96c0-8.840 7.160-16 16-16h224c8.840 0 16 7.160 16 16z"/></svg></div><div class="t">PURCHASE ORDERS</div><div class="l" style="top:22.5px">Open : 0</div><div class="l" style="top:39.5px">Awaiting reception : 0</div></div>
<div class="card" style="left:239px;top:416px"><div class="ic"><svg  width="19.5" height="26" viewBox="0 0 384 512"><path fill="#5f9fb4" d="M377 105L279.100 7c-4.500-4.500-10.600-7-17-7H256v128h128v-6.100c0-6.300-2.500-12.400-7-16.900zm-153 31V0H24C10.700 0 0 10.700 0 24v464c0 13.300 10.700 24 24 24h336c13.300 0 24-10.700 24-24V160H248c-13.200 0-24-10.800-24-24zM64 72c0-4.420 3.580-8 8-8h80c4.420 0 8 3.580 8 8v16c0 4.420-3.580 8-8 8H72c-4.420 0-8-3.580-8-8V72zm0 80v-16c0-4.420 3.580-8 8-8h80c4.420 0 8 3.580 8 8v16c0 4.420-3.580 8-8 8H72c-4.420 0-8-3.580-8-8zm144 263.880V440c0 4.420-3.580 8-8 8h-16c-4.420 0-8-3.580-8-8v-24.290c-11.290-.58-22.270-4.520-31.370-11.350-3.900-2.930-4.100-8.770-.57-12.140l11.750-11.210c2.770-2.640 6.890-2.760 10.130-.73 3.870 2.420 8.260 3.720 12.820 3.720h28.110c6.500 0 11.800-5.920 11.800-13.190 0-5.950-3.610-11.190-8.770-12.730l-45-13.500c-18.590-5.580-31.580-23.420-31.580-43.390 0-24.520 19.050-44.440 42.670-45.070V232c0-4.420 3.580-8 8-8h16c4.420 0 8 3.580 8 8v24.290c11.290.58 22.270 4.510 31.370 11.350 3.900 2.930 4.100 8.770.57 12.140l-11.750 11.210c-2.770 2.640-6.890 2.760-10.130.73-3.870-2.430-8.260-3.720-12.820-3.720h-28.110c-6.500 0-11.800 5.920-11.800 13.190 0 5.950 3.610 11.190 8.770 12.730l45 13.500c18.590 5.580 31.580 23.420 31.580 43.390 0 24.530-19.050 44.440-42.670 45.070z"/></svg></div><div class="t">VENDOR INVOICES</div><div class="l" style="top:22.5px">To pay : 0</div></div>
<div class="card" style="left:556px;top:416px"><div class="ic"><svg  width="26.0" height="26" viewBox="0 0 512 512"><path fill="#c49447" d="M496 128v16a8 8 0 0 1-8 8h-24v12c0 6.627-5.373 12-12 12H60c-6.627 0-12-5.373-12-12v-12H24a8 8 0 0 1-8-8v-16a8 8 0 0 1 4.941-7.392l232-88a7.996 7.996 0 0 1 6.118 0l232 88A8 8 0 0 1 496 128zm-24 304H40c-13.255 0-24 10.745-24 24v16a8 8 0 0 0 8 8h464a8 8 0 0 0 8-8v-16c0-13.255-10.745-24-24-24zM96 192v192H60c-6.627 0-12 5.373-12 12v20h416v-20c0-6.627-5.373-12-12-12h-36V192h-64v192h-64V192h-64v192h-64V192H96z"/></svg></div><div class="t">BANK ACCOUNT</div><div class="l" style="top:22.5px">Checks awaiting deposit : 0</div></div>
<div class="card" style="left:873px;top:416px"><div class="ic"><svg  width="32.5" height="26" viewBox="0 0 640 512"><path fill="#84683f" d="M96 224c35.3 0 64-28.7 64-64s-28.7-64-64-64-64 28.7-64 64 28.7 64 64 64zm448 0c35.3 0 64-28.7 64-64s-28.7-64-64-64-64 28.7-64 64 28.7 64 64 64zm32 32h-64c-17.6 0-33.5 7.1-45.1 18.600 40.3 22.1 68.9 62 75.1 109.400h66c17.700 0 32-14.300 32-32v-32c0-35.300-28.700-64-64-64zm-256 0c61.900 0 112-50.100 112-112S381.900 32 320 32 208 82.100 208 144s50.100 112 112 112zm76.800 32h-8.300c-20.800 10-43.900 16-68.500 16s-47.600-6-68.500-16h-8.300C179.600 288 128 339.600 128 403.200V432c0 26.500 21.500 48 48 48h288c26.500 0 48-21.500 48-48v-28.800c0-63.600-51.600-115.200-115.200-115.200zm-223.700-13.400C161.500 263.100 145.600 256 128 256H64c-35.300 0-64 28.700-64 64v32c0 17.700 14.300 32 32 32h65.900c6.300-47.400 34.900-87.300 75.200-109.400z"/></svg></div><div class="t">MEMBERS</div><div class="l" style="top:22.5px">Subscription to receive : 0</div></div>
<div class="card" style="left:239px;top:511px"><div class="ic"><svg  width="26.0" height="26" viewBox="0 0 512 512"><path fill="#84683f" d="M461.2 128H80c-8.840 0-16-7.160-16-16s7.160-16 16-16h384c8.840 0 16-7.160 16-16 0-26.510-21.490-48-48-48H64C28.650 32 0 60.650 0 96v320c0 35.350 28.650 64 64 64h397.200c28.020 0 50.800-21.530 50.800-48V176c0-26.470-22.780-48-50.800-48zM416 336c-17.670 0-32-14.330-32-32s14.330-32 32-32 32 14.330 32 32-14.330 32-32 32z"/></svg></div><div class="t">EXPENSE REPORT</div><div class="l" style="top:22.5px">To pay : 0</div></div>
<div class="card" style="left:556px;top:511px"><div class="ic"><svg  width="32.5" height="26" viewBox="0 0 640 512"><path fill="#84683f" d="M115.38 136.9l102.110 37.180c35.190-81.540 86.210-144.290 139-173.700-95.880-4.890-188.780 36.960-248.530 111.800-6.690 8.400-2.660 21.050 7.420 24.720zm132.250 48.160l238.480 86.830c35.760-121.380 18.700-231.660-42.630-253.980-7.400-2.700-15.130-4-23.090-4-58.020.01-128.270 69.170-172.760 171.150zM521.480 60.500c6.220 16.300 10.830 34.600 13.200 55.190 5.740 49.890-1.420 108.230-18.950 166.980l102.620 37.360c10.090 3.670 21.310-3.430 21.570-14.170 2.320-95.690-41.910-187.440-118.440-245.360zM560 447.980H321.060L386 269.500l-60.140-21.900-72.900 200.370H16c-8.840 0-16 7.160-16 16.010v32.010C0 504.830 7.160 512 16 512h544c8.840 0 16-7.170 16-16.010v-32.010c0-8.840-7.160-16-16-16z"/></svg></div><div class="t">LEAVE</div><div class="l" style="top:22.5px">To approve : 0</div></div>
<div class="box" style="left:239px;top:627px;width:455px;height:107px;border-bottom:1px solid #c8c8c8"><div class="bh" style="top:0"><span>Login Information</span><svg style="left:409px;top:8.900px" width="14.4" height="14.4" viewBox="0 -1536 1792 1792"><path fill="#989898" transform="scale(1,-1)" d="M1792 640q0 -26 -19 -45l-256 -256q-19 -19 -45 -19t-45 19t-19 45v128h-384v-384h128q26 0 45 -19t19 -45t-19 -45l-256 -256q-19 -19 -45 -19t-45 19l-256 256q-19 19 -19 45t19 45t45 19h128v384h-384v-128q0 -26 -19 -45t-45 -19t-45 19l-256 256q-19 19 -19 45 t19 45l256 256q19 19 45 19t45 -19t19 -45v-128h384v384h-128q-26 0 -45 19t-19 45t19 45l256 256q19 19 45 19t45 -19l256 -256q19 -19 19 -45t-19 -45t-45 -19h-128v-384h384v128q0 26 19 45t45 19t45 -19l256 -256q19 -19 19 -45z"/></svg><svg style="left:433.2px;top:9.800px" width="14.0" height="14" viewBox="0 0 512 512"><path fill="#828282" d="M464 32H48C21.500 32 0 53.500 0 80v352c0 26.500 21.500 48 48 48h416c26.500 0 48-21.500 48-48V80c0-26.500-21.500-48-48-48zm-83.600 290.500c4.800 4.800 4.800 12.600 0 17.400l-40.500 40.500c-4.800 4.800-12.600 4.800-17.400 0L256 313.300l-66.500 67.100c-4.800 4.800-12.600 4.800-17.400 0l-40.500-40.500c-4.800-4.800-4.800-12.600 0-17.400l67.100-66.500-67.100-66.500c-4.800-4.800-4.800-12.600 0-17.400l40.500-40.500c4.800-4.800 12.600-4.800 17.400 0l66.500 67.100 66.500-67.100c4.800-4.800 12.600-4.800 17.400 0l40.500 40.500c4.800 4.800 4.800 12.600 0 17.400L313.300 256l67.100 66.500z"/></svg></div><div class="row" style="top:38px;height:35px;border-bottom:1px solid #e6e6e6"><span style="left:8px">User</span><svg width="16.5" height="18.8" viewBox="0 0 28 32" style="position:absolute;left:196.400px;top:7.600px"><defs><linearGradient id="ug" x1="0" y1="0" x2="0" y2="1"><stop offset="0" stop-color="#929292"/><stop offset="0.55" stop-color="#6e6e6e"/><stop offset="1" stop-color="#505050"/></linearGradient></defs><path fill="url(#ug)" d="M14 1.200c4 0 7 3.300 7 7.800 0 3.300-1.200 6.100-2.600 7.700v2.600c0 1 .6 1.700 1.600 2l4.300 1.200c1.400.4 2.300 1.500 2.300 2.900v1.400c0 .5-.2 1-.5 1.400l-1.700 2c-.4.400-.9.700-1.500.700H5.100c-.6 0-1.100-.3-1.500-.7l-1.700-2c-.3-.4-.5-.9-.5-1.400v-1.400c0-1.400.9-2.500 2.300-2.900L8 21.300c1-.3 1.600-1 1.600-2v-2.600C8.200 15.100 7 12.300 7 9c0-4.500 3-7.800 7-7.800z"/></svg><span style="left:217.500px;color:#1a2157">SuperAdmin</span></div><div class="row" style="top:73px;height:33px;background:#fafafa"><span style="left:8px">Previous login</span><span style="left:195px">04/01/2020 12:26 AM</span></div></div>
<div class="box" style="left:239px;top:769px;width:455px;height:72px;border-bottom:1px solid #e6e6e6"><div class="bh" style="top:0"><span>Birthdays of this month (users)</span><svg style="left:409px;top:8.900px" width="14.4" height="14.4" viewBox="0 -1536 1792 1792"><path fill="#989898" transform="scale(1,-1)" d="M1792 640q0 -26 -19 -45l-256 -256q-19 -19 -45 -19t-45 19t-19 45v128h-384v-384h128q26 0 45 -19t19 -45t-19 -45l-256 -256q-19 -19 -45 -19t-45 19l-256 256q-19 19 -19 45t19 45t45 19h128v384h-384v-128q0 -26 -19 -45t-45 -19t-45 19l-256 256q-19 19 -19 45 t19 45l256 256q19 19 45 19t45 -19t19 -45v-128h384v384h-128q-26 0 -45 19t-19 45t19 45l256 256q19 19 45 19t45 -19l256 -256q19 -19 19 -45t-19 -45t-45 -19h-128v-384h384v128q0 26 19 45t45 19t45 -19l256 -256q19 -19 19 -45z"/></svg><svg style="left:433.2px;top:9.800px" width="14.0" height="14" viewBox="0 0 512 512"><path fill="#828282" d="M464 32H48C21.500 32 0 53.500 0 80v352c0 26.500 21.500 48 48 48h416c26.500 0 48-21.500 48-48V80c0-26.500-21.500-48-48-48zm-83.600 290.500c4.800 4.800 4.800 12.600 0 17.400l-40.500 40.500c-4.800 4.800-12.600 4.800-17.400 0L256 313.300l-66.500 67.100c-4.800 4.800-12.600 4.800-17.400 0l-40.500-40.500c-4.800-4.800-4.800-12.600 0-17.400l67.100-66.500-67.100-66.500c-4.800-4.800-4.800-12.600 0-17.400l40.500-40.500c4.800-4.800 12.600-4.800 17.400 0l66.500 67.100 66.500-67.100c4.800-4.800 12.600-4.800 17.400 0l40.500 40.500c4.800 4.800 4.800 12.600 0 17.400L313.300 256l67.100 66.500z"/></svg></div><div class="row" style="top:38px"><span style="left:0;width:455px;text-align:center;color:#b0b0b0">None</span></div></div>
<div class="box" style="left:239px;top:876px;width:455px;height:60px"><div class="bh" style="top:0"><span>Latest 5 members</span><svg style="left:409px;top:8.900px" width="14.4" height="14.4" viewBox="0 -1536 1792 1792"><path fill="#989898" transform="scale(1,-1)" d="M1792 640q0 -26 -19 -45l-256 -256q-19 -19 -45 -19t-45 19t-19 45v128h-384v-384h128q26 0 45 -19t19 -45t-19 -45l-256 -256q-19 -19 -45 -19t-45 19l-256 256q-19 19 -19 45t19 45t45 19h128v384h-384v-128q0 -26 -19 -45t-45 -19t-45 19l-256 256q-19 19 -19 45 t19 45l256 256q19 19 45 19t45 -19t19 -45v-128h384v384h-128q-26 0 -45 19t-19 45t19 45l256 256q19 19 45 19t45 -19l256 -256q19 -19 19 -45t-19 -45t-45 -19h-128v-384h384v128q0 26 19 45t45 19t45 -19l256 -256q19 -19 19 -45z"/></svg><svg style="left:433.2px;top:9.800px" width="14.0" height="14" viewBox="0 0 512 512"><path fill="#828282" d="M464 32H48C21.500 32 0 53.500 0 80v352c0 26.500 21.500 48 48 48h416c26.500 0 48-21.500 48-48V80c0-26.500-21.500-48-48-48zm-83.600 290.500c4.800 4.800 4.800 12.600 0 17.400l-40.500 40.500c-4.800 4.800-12.600 4.800-17.400 0L256 313.300l-66.500 67.100c-4.800 4.800-12.600 4.800-17.400 0l-40.500-40.500c-4.800-4.800-4.800-12.600 0-17.400l67.100-66.500-67.100-66.500c-4.800-4.800-4.800-12.600 0-17.400l40.500-40.500c4.800-4.800 12.600-4.800 17.400 0l66.500 67.100 66.500-67.100c4.800-4.800 12.600-4.800 17.400 0l40.500 40.500c4.800 4.800 4.800 12.600 0 17.400L313.300 256l67.100 66.500z"/></svg></div><div class="row" style="top:38px"><span style="left:0;width:455px;text-align:center;top:8px;color:#222">No recorded customers</span></div></div>
<svg width="0" height="0" style="position:absolute"><defs><linearGradient id="ug2" x1="0" y1="0" x2="0" y2="1"><stop offset="0" stop-color="#808080"/><stop offset="0.55" stop-color="#595959"/><stop offset="1" stop-color="#3e3e3e"/></linearGradient></defs></svg><div class="box" style="left:735px;top:627px;width:455px;height:39px"><div class="bh" style="top:0;height:39px"><span style="top:10.500px">Database Statistics</span></div></div>
<div class="st" style="left:787px;top:678.5px"><div class="n">Users</div><div class="v"><svg width="12.7" height="13" viewBox="0 0 12.7 13"><path fill="url(#ug2)" d="M6.350.3c1.900 0 3 1.500 3 3.500 0 1.300-.5 2.500-1.200 3.300v1.100c0 .5.300.8.800 1l2.200.7c.9.300 1.300.9 1.300 1.800V13H.250v-1.300c0-.9.400-1.500 1.300-1.800l2.200-.7c.5-.2.800-.5.800-1V7.100c-.7-.8-1.200-2-1.200-3.300 0-2 1.100-3.500 3-3.500z"/></svg>2</div></div>
<div class="st" style="left:1006px;top:678.5px"><div class="n">Customers</div><div class="v"><svg width="14.5" height="14" viewBox="0 0 14.5 14"><path fill="#a3a9cf" d="M.3 3.200L9 2v11.700H.3z"/><path fill="#6f78b0" d="M8.800 1.400L10.200.2h3.400l.7.700v12.400l-5.500.4z"/><path fill="#fff" fill-opacity=".92" d="M1.300 4.600h1.500v1.500H1.300zM3.700 4.500h1.500V6H3.700zM6.100 4.400h1.500v1.500H6.100zM1.300 7.400h1.500v1.500H1.300zM3.700 7.400h1.500v1.500H3.700zM6.100 7.400h1.500v1.500H6.100zM1.300 10.200h1.500v1.500H1.300zM3.700 10.200h1.500v1.500H3.700zM6.100 10.200h1.500v1.500H6.100z"/><path stroke="#c5c9e4" stroke-width=".8" d="M9.600 3.200h4M9.600 5.400h4M9.600 7.600h4M9.600 9.800h4M9.600 12h4" fill="none"/></svg>0</div></div>
<div class="st" style="left:787px;top:747.5px"><div class="n">Prospects</div><div class="v"><svg width="14.5" height="14" viewBox="0 0 14.5 14"><path fill="#a3a9cf" d="M.3 3.200L9 2v11.700H.3z"/><path fill="#6f78b0" d="M8.800 1.400L10.200.2h3.400l.7.700v12.400l-5.500.4z"/><path fill="#fff" fill-opacity=".92" d="M1.300 4.600h1.500v1.500H1.300zM3.700 4.500h1.500V6H3.700zM6.100 4.400h1.500v1.500H6.100zM1.300 7.400h1.500v1.500H1.300zM3.700 7.400h1.500v1.500H3.700zM6.100 7.400h1.500v1.500H6.100zM1.300 10.200h1.500v1.500H1.300zM3.700 10.200h1.500v1.500H3.700zM6.100 10.200h1.500v1.500H6.100z"/><path stroke="#c5c9e4" stroke-width=".8" d="M9.600 3.200h4M9.600 5.400h4M9.600 7.600h4M9.600 9.800h4M9.600 12h4" fill="none"/></svg>0</div></div>
<div class="st" style="left:1006px;top:747.5px"><div class="n">Vendors</div><div class="v"><svg width="14.5" height="14" viewBox="0 0 14.5 14"><path fill="#a3a9cf" d="M.3 3.200L9 2v11.700H.3z"/><path fill="#6f78b0" d="M8.800 1.400L10.200.2h3.400l.7.700v12.400l-5.500.4z"/><path fill="#fff" fill-opacity=".92" d="M1.300 4.600h1.500v1.500H1.300zM3.700 4.500h1.500V6H3.700zM6.100 4.400h1.500v1.500H6.100zM1.300 7.400h1.500v1.500H1.300zM3.700 7.400h1.500v1.500H3.700zM6.100 7.400h1.500v1.500H6.100zM1.300 10.200h1.500v1.500H1.300zM3.700 10.200h1.500v1.500H3.700zM6.100 10.200h1.500v1.500H6.100z"/><path stroke="#c5c9e4" stroke-width=".8" d="M9.600 3.200h4M9.600 5.400h4M9.600 7.600h4M9.600 9.800h4M9.600 12h4" fill="none"/></svg>0</div></div>
<div class="st" style="left:787px;top:816.5px"><div class="n" style="text-align:left;padding-left:2.500px">Contacts/Addres…</div><div class="v"><svg width="15" height="14" viewBox="0 0 15 14"><path fill="#8b92c2" d="M7 3.500l4-.5v10.400H7z"/><path fill="#6f78b0" d="M10.500 1.400L11.700.4h2.400l.6.600v12.100l-4.200.3z"/><path stroke="#d5d8ec" stroke-width=".8" d="M11.300 3.200h3M11.300 5.400h3M11.300 7.600h3M11.300 9.800h3M11.300 12h3M7.800 5.300h2M7.800 8h2M7.800 10.700h2" fill="none"/><g transform="translate(0,2.700) scale(0.36)"><path fill="url(#ug2)" d="M14 1.200c4 0 7 3.300 7 7.800 0 3.300-1.200 6.100-2.600 7.700v2.600c0 1 .6 1.700 1.600 2l4.300 1.200c1.400.4 2.300 1.500 2.300 2.900v1.400c0 .5-.2 1-.5 1.400l-1.700 2c-.4.400-.9.700-1.500.700H5.100c-.6 0-1.100-.3-1.500-.7l-1.700-2c-.3-.4-.5-.9-.5-1.400v-1.400c0-1.400.9-2.500 2.300-2.900L8 21.300c1-.3 1.600-1 1.600-2v-2.600C8.200 15.100 7 12.300 7 9c0-4.500 3-7.800 7-7.800z"/></g></svg>0</div></div>
<div class="st" style="left:1006px;top:816.5px"><div class="n">Members</div><div class="v"><svg width="12.7" height="13" viewBox="0 0 12.7 13"><path fill="url(#ug2)" d="M6.350.3c1.900 0 3 1.500 3 3.500 0 1.300-.5 2.500-1.200 3.300v1.100c0 .5.300.8.800 1l2.200.7c.9.300 1.300.9 1.300 1.800V13H.250v-1.300c0-.9.400-1.500 1.300-1.800l2.200-.7c.5-.2.800-.5.800-1V7.100c-.7-.8-1.200-2-1.200-3.300 0-2 1.100-3.500 3-3.500z"/></svg>0</div></div>
<div class="st" style="left:787px;top:885.5px"><div class="n">Products</div><div class="v"><svg width="13" height="14" viewBox="0 0 13 14"><path fill="#e3c878" d="M6.500 1l5.500 2.400v7L6.500 13 1 10.400v-7z"/><path fill="#b89444" d="M6.500 6l5.500-2.600v7L6.500 13z"/><path fill="#f3e3ae" d="M6.500 1L12 3.400 6.500 6 1 3.400z"/><path fill="none" stroke="#8f7430" stroke-width=".6" d="M6.500 1l5.500 2.400v7L6.500 13 1 10.400v-7z"/></svg>0</div></div>
<div class="st" style="left:1006px;top:885.5px"><div class="n">Services</div><div class="v"><svg width="15" height="14" viewBox="0 0 15 14"><path fill="#c9a654" d="M7.500 1.200c2.500 0 4.100 1.900 4.100 4.500v3.500H3.400V5.700c0-2.600 1.600-4.500 4.100-4.500z"/><path fill="#8c6c28" d="M1.800 9h11.400l1.200 2.400H.6z"/><path fill="#3c3c3c" d="M2.300 11.600h10.400l.8 1.600H1.500z"/><path fill="#f5e6b4" d="M6 3.500h3v3.400H6z"/><path fill="#3c3c3c" d="M9.500 10.200l3 1.200-2 .8-3.200-.6z"/></svg>0</div></div>
<svg id="wm" width="1216" height="936" viewBox="0 0 1216 936"><text x="110" y="533" font-family="Liberation Sans, sans-serif" font-weight="bold" font-size="352" textLength="950" lengthAdjust="spacingAndGlyphs" fill="#4f86c6" fill-opacity="0.045">HYINTECH</text></svg>
</body></html>
